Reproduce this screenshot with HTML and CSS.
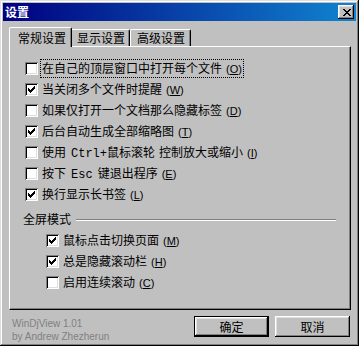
FILE: index.html
```html
<!DOCTYPE html>
<html lang="zh-CN">
<head>
<meta charset="utf-8">
<title>设置</title>
<link rel="stylesheet" href="styles.css">
</head>
<body>
<div class="window">
  <div class="titlebar">
    <span class="title">设置</span>
    <span class="close">
      <svg width="8" height="7" viewBox="0 0 8 7" shape-rendering="crispEdges"><path d="M0 0h2v1h-2zM6 0h2v1h-2zM1 1h2v1h-2zM5 1h2v1h-2zM2 2h4v1h-4zM3 3h2v1h-2zM2 4h4v1h-4zM1 5h2v1h-2zM5 5h2v1h-2zM0 6h2v1h-2zM6 6h2v1h-2z" fill="#000"/></svg>
    </span>
  </div>
  <div class="content">
    <div class="tabs">
      <div class="tab active">常规设置</div>
      <div class="tab second">显示设置</div>
      <div class="tab third">高级设置</div>
    </div>
    <div class="panel">
      <div class="row"><span class="box"></span><span class="label focus">在自己的顶层窗口中打开每个文件<span class="key">(<u>O</u>)</span></span></div>
      <div class="row"><span class="box checked"><svg width="7" height="7" viewBox="0 0 7 7" shape-rendering="crispEdges"><path d="M6 0h1v1h-1zM5 1h2v1h-2zM0 2h1v1h-1zM4 2h3v1h-3zM0 3h2v1h-2zM3 3h3v1h-3zM0 4h5v1h-5zM1 5h3v1h-3zM2 6h1v1h-1z" fill="#000"/></svg></span><span class="label">当关闭多个文件时提醒<span class="key">(<u>W</u>)</span></span></div>
      <div class="row"><span class="box"></span><span class="label">如果仅打开一个文档那么隐藏标签<span class="key">(<u>D</u>)</span></span></div>
      <div class="row"><span class="box checked"><svg width="7" height="7" viewBox="0 0 7 7" shape-rendering="crispEdges"><path d="M6 0h1v1h-1zM5 1h2v1h-2zM0 2h1v1h-1zM4 2h3v1h-3zM0 3h2v1h-2zM3 3h3v1h-3zM0 4h5v1h-5zM1 5h3v1h-3zM2 6h1v1h-1z" fill="#000"/></svg></span><span class="label">后台自动生成全部缩略图<span class="key">(<u>T</u>)</span></span></div>
      <div class="row"><span class="box"></span><span class="label">使用<span class="mono">Ctrl+</span>鼠标滚轮<span class="sp"></span>控制放大或缩小<span class="key">(<u>I</u>)</span></span></div>
      <div class="row"><span class="box"></span><span class="label">按下<span class="mono after">Esc</span>键退出程序<span class="key">(<u>E</u>)</span></span></div>
      <div class="row"><span class="box checked"><svg width="7" height="7" viewBox="0 0 7 7" shape-rendering="crispEdges"><path d="M6 0h1v1h-1zM5 1h2v1h-2zM0 2h1v1h-1zM4 2h3v1h-3zM0 3h2v1h-2zM3 3h3v1h-3zM0 4h5v1h-5zM1 5h3v1h-3zM2 6h1v1h-1z" fill="#000"/></svg></span><span class="label">换行显示长书签<span class="key">(<u>L</u>)</span></span></div>

      <div class="group">
        <span class="group-label">全屏模式</span>
        <span class="group-line"></span>
      </div>
      <div class="row sub"><span class="box checked"><svg width="7" height="7" viewBox="0 0 7 7" shape-rendering="crispEdges"><path d="M6 0h1v1h-1zM5 1h2v1h-2zM0 2h1v1h-1zM4 2h3v1h-3zM0 3h2v1h-2zM3 3h3v1h-3zM0 4h5v1h-5zM1 5h3v1h-3zM2 6h1v1h-1z" fill="#000"/></svg></span><span class="label">鼠标点击切换页面<span class="key">(<u>M</u>)</span></span></div>
      <div class="row sub"><span class="box checked"><svg width="7" height="7" viewBox="0 0 7 7" shape-rendering="crispEdges"><path d="M6 0h1v1h-1zM5 1h2v1h-2zM0 2h1v1h-1zM4 2h3v1h-3zM0 3h2v1h-2zM3 3h3v1h-3zM0 4h5v1h-5zM1 5h3v1h-3zM2 6h1v1h-1z" fill="#000"/></svg></span><span class="label">总是隐藏滚动栏<span class="key">(<u>H</u>)</span></span></div>
      <div class="row sub"><span class="box"></span><span class="label">启用连续滚动<span class="key">(<u>C</u>)</span></span></div>
    </div>
    <div class="bottom">
      <div class="about">
        <div>WinDjView 1.01</div>
        <div>by Andrew Zhezherun</div>
      </div>
      <div class="buttons">
        <div class="btn default"><span>确定</span></div>
        <div class="btn"><span>取消</span></div>
      </div>
    </div>
  </div>
</div>
</body>
</html>
```

FILE: styles.css
```css
html, body {
  margin: 0;
  padding: 0;
  background: #c0c0c0;
}

body {
  font-family: "Noto Sans CJK SC", sans-serif;
  font-size: 12px;
  color: #000;
}

.window {
  width: 359px;
  height: 346px;
  box-sizing: border-box;
  padding: 3px;
  background: #c0c0c0;
  box-shadow: inset -1px -1px #000, inset 1px 1px #dfdfdf, inset -2px -2px #808080, inset 2px 2px #fff;
  display: flex;
  flex-direction: column;
}

.titlebar {
  height: 18px;
  background: linear-gradient(to right, #000080, #1084d0);
  display: flex;
  align-items: center;
  justify-content: space-between;
  padding: 0 2px 0 2px;
}

.title {
  color: #fff;
  font-weight: bold;
  font-size: 12px;
  line-height: 18px;
}

.close {
  width: 16px;
  height: 14px;
  box-sizing: border-box;
  background: #c0c0c0;
  box-shadow: inset -1px -1px #000, inset 1px 1px #fff, inset -2px -2px #808080, inset 2px 2px #dfdfdf;
  display: flex;
  align-items: center;
  justify-content: center;
  padding-left: 1px;
}

.content {
  flex: 1;
  padding: 6px 5px 0 6px;
  display: flex;
  flex-direction: column;
}

.tabs {
  display: flex;
  align-items: flex-end;
  height: 19px;
  position: relative;
  z-index: 1;
}

.tab {
  box-sizing: border-box;
  height: 17px;
  line-height: 15px;
  border-top: 1px solid #fff;
  border-left: 1px solid #fff;
  border-right: 1px solid #000;
  box-shadow: inset -1px 0 #808080;
  border-radius: 2px 2px 0 0;
  background: #c0c0c0;
  padding-left: 7px;
}

.tab.active {
  height: 20px;
  margin-bottom: -1px;
  width: 63px;
  padding-left: 8px;
  line-height: 19px;
  position: relative;
  z-index: 2;
}

.tab.second {
  width: 59px;
  margin-left: -1px;
  padding-left: 5px;
}

.tab.third {
  width: 61px;
  padding-left: 6px;
}

.panel {
  height: 264px;
  box-sizing: border-box;
  border: 1px solid;
  border-color: #fff #000 #000 #fff;
  box-shadow: inset -1px -1px #808080;
  padding: 11px 0 0 15px;
}

.row {
  height: 21px;
  display: flex;
  align-items: center;
}

.row.sub {
  padding-left: 21px;
}

.box {
  width: 13px;
  height: 13px;
  box-sizing: border-box;
  background: #fff;
  box-shadow: inset 1px 1px #808080, inset -1px -1px #fff, inset 2px 2px #000, inset -2px -2px #dfdfdf;
  display: flex;
  align-items: center;
  justify-content: center;
  flex: none;
}

.label {
  margin-left: 4px;
  line-height: 14px;
  white-space: nowrap;
}

.label.focus {
  outline: 1px dotted #000;
  outline-offset: 1px;
}

.key {
  font-family: "Liberation Sans", sans-serif;
  font-size: 11px;
  margin-left: 4px;
}

.mono {
  font-family: "Liberation Mono", monospace;
  font-size: 12px;
  margin-left: 5px;
}

.mono.after {
  margin-right: 5px;
}

.sp {
  display: inline-block;
  width: 4px;
}

.group {
  display: flex;
  align-items: center;
  height: 14px;
  margin-top: 7px;
  margin-bottom: 4px;
  margin-left: -2px;
  padding-right: 14px;
}

.group-label {
  line-height: 14px;
}

.group-line {
  flex: 1;
  height: 0;
  border-top: 1px solid #808080;
  border-bottom: 1px solid #fff;
  margin-left: 5px;
  margin-top: 1px;
}

.bottom {
  flex: 1;
  display: flex;
  justify-content: space-between;
  padding: 5px 1px 0 3px;
}

.about {
  font-family: "Liberation Sans", sans-serif;
  font-size: 10px;
  line-height: 13px;
  color: #808080;
  padding-top: 2px;
}

.buttons {
  display: flex;
  gap: 6px;
  padding-top: 1px;
}

.btn {
  width: 75px;
  height: 21px;
  box-sizing: border-box;
  background: #c0c0c0;
  box-shadow: inset -1px -1px #000, inset 1px 1px #fff, inset -2px -2px #808080, inset 2px 2px #dfdfdf;
  display: flex;
  align-items: center;
  justify-content: center;
  line-height: 14px;
}

.btn.default {
  border: 1px solid #000;
}
```
